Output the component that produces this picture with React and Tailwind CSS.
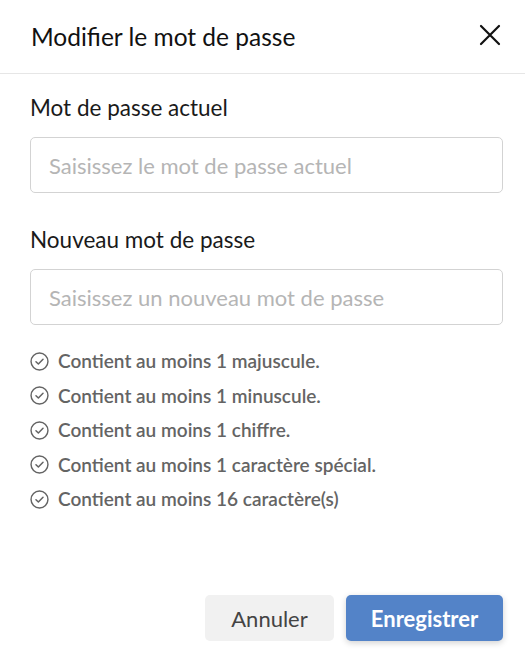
import React from 'react';

const rules = [
  'Contient au moins 1 majuscule.',
  'Contient au moins 1 minuscule.',
  'Contient au moins 1 chiffre.',
  'Contient au moins 1 caractère spécial.',
  'Contient au moins 16 caractère(s)',
];

const CheckCircle = () => (
  <svg width="19" height="19" viewBox="0 0 20 20" fill="none" stroke="currentColor" className="shrink-0">
    <circle cx="10" cy="10" r="8.9" strokeWidth="1.5" />
    <path d="M6.3 10.2l2.5 2.5 4.9-5" strokeWidth="1.6" strokeLinecap="round" strokeLinejoin="round" />
  </svg>
);

const Field = ({ label, placeholder, className = '' }) => (
  <div className={className}>
    <label className="block text-[22.5px] leading-[28px] text-[#1a1a1a]">{label}</label>
    <input
      type="password"
      placeholder={placeholder}
      className="mt-[15px] w-full h-[56px] rounded-[5px] border border-[#d3d3d3] px-[18px] text-[22px] text-[#1a1a1a] placeholder:text-[#b5b5b5] outline-none"
    />
  </div>
);

export default function App() {
  return (
    <div
      className="w-[525px] h-[669px] flex flex-col bg-white"
      style={{ fontFamily: 'Lato, "Open Sans", sans-serif' }}
    >
      {/* Header */}
      <div className="h-[74px] shrink-0 flex items-center justify-between pl-[31px] pr-[24px] border-b border-[#e6e6e6]">
        <h1 className="text-[24.5px] leading-[30px] text-[#111]">Modifier le mot de passe</h1>
        <button className="text-[#111] -mt-[4px]">
          <svg width="22" height="22" viewBox="0 0 22 22" stroke="currentColor" strokeWidth="2.2" strokeLinecap="round">
            <path d="M2 2l18 18M20 2L2 20" />
          </svg>
        </button>
      </div>

      {/* Form */}
      <div className="flex-1 flex flex-col pl-[30px] pr-[22px] pt-[20px] pb-[28px]">
        <Field label="Mot de passe actuel" placeholder="Saisissez le mot de passe actuel" />
        <Field className="mt-[33px]" label="Nouveau mot de passe" placeholder="Saisissez un nouveau mot de passe" />

        <ul className="mt-[19px]">
          {rules.map((r) => (
            <li key={r} className="h-[34.5px] flex items-center gap-[9px] text-[19px] font-semibold text-[#646464]">
              <CheckCircle />
              <span>{r}</span>
            </li>
          ))}
        </ul>

        <div className="mt-auto flex justify-end gap-[12px]">
          <button className="w-[129px] h-[46px] rounded-[5px] bg-[#f1f1f1] text-[22px] text-[#444]">
            Annuler
          </button>
          <button className="w-[157px] h-[46px] rounded-[5px] bg-[#5383c8] text-[22px] font-bold text-white shadow-[0_2px_6px_rgba(0,0,0,0.18)]">
            Enregistrer
          </button>
        </div>
      </div>
    </div>
  );
}
